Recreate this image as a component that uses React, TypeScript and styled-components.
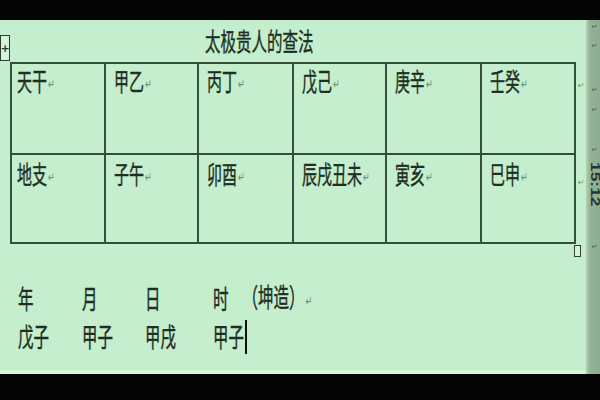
import React from "react";
import styled, { createGlobalStyle } from "styled-components";

const Global = createGlobalStyle`
  html, body { margin: 0; padding: 0; background: #050505; }
  body { font-family: "Noto Sans CJK SC", "Noto Sans", sans-serif; }
`;

const Screen = styled.div`
  width: 600px;
  height: 400px;
  display: flex;
  flex-direction: column;
  background: #050505;
  overflow: hidden;
`;

const BlackBand = styled.div<{ $h: number }>`
  height: ${(p) => p.$h}px;
  flex: none;
  background: #050505;
`;

const Middle = styled.div`
  height: 354px;
  display: flex;
  flex: none;
`;

const Page = styled.div`
  flex: 1;
  position: relative;
  background: #c4eecd;
  border-bottom: 4px solid #d3f5da;
  padding-left: 10px;
  display: flex;
  flex-direction: column;
  color: #1e2e22;
`;

const Title = styled.div`
  height: 42px;
  line-height: 40px;
  padding-left: 195px;
  font-size: 15.5px;
`;

const Tall = styled.span<{ $s?: number }>`
  display: inline-block;
  transform: scaleY(${(p) => p.$s ?? 1.7});
  transform-origin: center;
  white-space: nowrap;
  -webkit-text-stroke: 0.25px #1e2e22;
`;

const Ret = styled.span`
  font-family: "DejaVu Sans", sans-serif;
  font-size: 8px;
  color: #6f8f75;
  margin-left: 1px;
  vertical-align: 1px;
  -webkit-text-stroke: 0;
`;

const TableWrap = styled.div`
  position: relative;
  display: grid;
  grid-template-columns: 96px 93px 95px 93px 95px 94px 10px;
  grid-template-rows: 93px 89px;
  width: max-content;
`;

const Cell = styled.div<{ $first: boolean; $top: boolean }>`
  border-right: 2px solid #344f3a;
  border-bottom: 2px solid #344f3a;
  border-left: ${(p) => (p.$first ? "2px solid #344f3a" : "none")};
  border-top: ${(p) => (p.$top ? "2px solid #344f3a" : "none")};
  padding: ${(p) => (p.$top ? "5px" : "7px")} 0 0 ${(p) => (p.$first ? "5px" : "8px")};
  font-size: 15px;
  line-height: 26px;
`;

const RowEnd = styled.div<{ $top: boolean }>`
  padding: ${(p) => (p.$top ? "14px" : "18px")} 0 0 1px;
  line-height: 12px;
`;

const MoveHandle = styled.div`
  position: absolute;
  left: -10px;
  top: -27px;
  width: 8px;
  height: 24px;
  border: 1px solid #2a3f2f;
  background: #d8f3dd;
  display: flex;
  align-items: center;
  justify-content: center;
  font-family: "DejaVu Sans", sans-serif;
  font-size: 11px;
  font-weight: bold;
  color: #2a3f2f;
`;

const ResizeHandle = styled.div`
  position: absolute;
  left: 564px;
  bottom: -13px;
  width: 5px;
  height: 10px;
  border: 1.5px solid #2f4434;
  background: #d8f3dd;
`;

const Birth = styled.div`
  margin-top: 34px;
  padding-left: 8px;
  display: grid;
  grid-template-columns: 64px 63px 68px auto;
  grid-auto-rows: 38px;
  font-size: 15.5px;
  line-height: 38px;
`;

const Gender = styled.span`
  margin-left: 14px;
`;

const Caret = styled.span`
  display: inline-block;
  width: 2px;
  height: 34px;
  background: #111;
  vertical-align: middle;
  margin-left: 1px;
  position: relative;
  top: -1px;
`;

const Ruler = styled.div`
  width: 17px;
  flex: none;
  background: linear-gradient(to right, #b3d2b5 0, #93b297 4px, #8aa98e 100%);
  display: flex;
  flex-direction: column;
  align-items: center;
`;

const RulerMark = styled.span<{ $mt: number }>`
  margin-top: ${(p) => p.$mt}px;
  font-family: "DejaVu Sans", sans-serif;
  font-size: 7px;
  line-height: 8px;
  color: #3f5e45;
`;

const Time = styled.span`
  margin-top: 8px;
  writing-mode: vertical-rl;
  font-family: "Liberation Sans", sans-serif;
  font-size: 12px;
  font-weight: bold;
  color: #24362a;
  transform: scaleY(1.45);
  transform-origin: top;
`;

const stems = ["天干", "甲乙", "丙丁", "戊己", "庚辛", "壬癸"];
const branches = ["地支", "子午", "卯酉", "辰戌丑未", "寅亥", "巳申"];

export default function App() {
  return (
    <>
      <Global />
      <Screen>
        <BlackBand $h={20} />
        <Middle>
          <Page>
            <Title>
              <Tall $s={1.6}>太极贵人的查法</Tall>
            </Title>
            <TableWrap>
              <MoveHandle>+</MoveHandle>
              {stems.map((t, i) => (
                <Cell key={t} $first={i === 0} $top>
                  <Tall>
                    {t}
                    <Ret>↵</Ret>
                  </Tall>
                </Cell>
              ))}
              <RowEnd $top>
                <Ret>↵</Ret>
              </RowEnd>
              {branches.map((t, i) => (
                <Cell key={t} $first={i === 0} $top={false}>
                  <Tall>
                    {t}
                    <Ret>↵</Ret>
                  </Tall>
                </Cell>
              ))}
              <RowEnd $top={false}>
                <Ret>↵</Ret>
              </RowEnd>
              <ResizeHandle />
            </TableWrap>
            <Birth>
              <span><Tall>年</Tall></span>
              <span><Tall>月</Tall></span>
              <span><Tall>日</Tall></span>
              <span>
                <Tall>时</Tall>
                <Gender>
                  <Tall>（坤造）<Ret>↵</Ret></Tall>
                </Gender>
              </span>
              <span><Tall>戊子</Tall></span>
              <span><Tall>甲子</Tall></span>
              <span><Tall>甲戌</Tall></span>
              <span>
                <Tall>甲子</Tall>
                <Caret />
              </span>
            </Birth>
          </Page>
          <Ruler>
            <RulerMark $mt={3}>↵</RulerMark>
            <RulerMark $mt={11}>↵</RulerMark>
            <RulerMark $mt={36}>↵</RulerMark>
            <RulerMark $mt={12}>↵</RulerMark>
            <RulerMark $mt={32}>↵</RulerMark>
            <Time>15:12</Time>
            <RulerMark $mt={50}>↵</RulerMark>
          </Ruler>
        </Middle>
        <BlackBand $h={26} />
      </Screen>
    </>
  );
}
